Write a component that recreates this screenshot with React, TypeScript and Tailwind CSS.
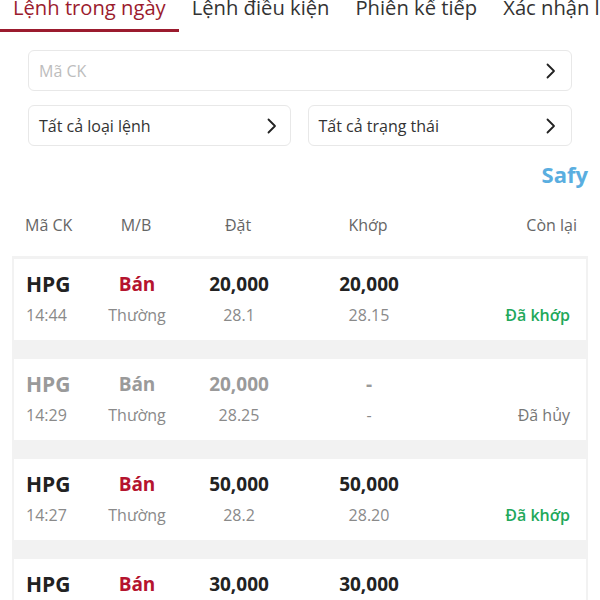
import React from "react";

type Row = {
  code: string;
  time: string;
  side: string;
  type: string;
  qty: string;
  price: string;
  mqty: string;
  mprice: string;
  status: string;
  cancelled?: boolean;
};

const rows: Row[] = [
  { code: "HPG", time: "14:44", side: "Bán", type: "Thường", qty: "20,000", price: "28.1", mqty: "20,000", mprice: "28.15", status: "Đã khớp" },
  { code: "HPG", time: "14:29", side: "Bán", type: "Thường", qty: "20,000", price: "28.25", mqty: "-", mprice: "-", status: "Đã hủy", cancelled: true },
  { code: "HPG", time: "14:27", side: "Bán", type: "Thường", qty: "50,000", price: "28.2", mqty: "50,000", mprice: "28.20", status: "Đã khớp" },
  { code: "HPG", time: "14:25", side: "Bán", type: "Thường", qty: "30,000", price: "28.3", mqty: "30,000", mprice: "28.30", status: "Đã khớp" },
];

function Chevron() {
  return (
    <svg width="10" height="16" viewBox="0 0 10 16" fill="none">
      <polyline points="1.5,1.5 8,8 1.5,14.5" stroke="#222" strokeWidth="1.8" strokeLinecap="round" strokeLinejoin="round" />
    </svg>
  );
}

export default function App() {
  const tabs = ["Lệnh trong ngày", "Lệnh điều kiện", "Phiên kế tiếp", "Xác nhận lệnh"];
  return (
    <div className="w-[600px] h-[600px] overflow-hidden bg-white font-['Open_Sans',sans-serif]">
      <div className="flex whitespace-nowrap -mt-[5px]">
        {tabs.map((t, i) => (
          <div
            key={t}
            className={
              i === 0
                ? "px-[13px] pb-[10px] text-[20.2px] leading-[24px] text-[#9b1b2e] border-b-[3px] border-[#9b1b2e]"
                : "px-[13px] pb-[10px] text-[20.2px] leading-[24px] text-[#333] border-b-[3px] border-transparent"
            }
          >
            {t}
          </div>
        ))}
      </div>

      <div className="mx-[28px] mt-[18px] h-[41px] rounded-[6px] border border-[#e8e8e8] flex items-center justify-between pl-[10px] pr-[15px]">
        <span className="text-[16px] text-[#bdbdbd]">Mã CK</span>
        <Chevron />
      </div>

      <div className="mx-[28px] mt-[14px] flex gap-[17px]">
        <div className="flex-1 h-[41px] rounded-[6px] border border-[#e8e8e8] flex items-center justify-between pl-[10px] pr-[13px]">
          <span className="text-[16px] text-[#333]">Tất cả loại lệnh</span>
          <Chevron />
        </div>
        <div className="flex-1 h-[41px] rounded-[6px] border border-[#e8e8e8] flex items-center justify-between pl-[10px] pr-[15px]">
          <span className="text-[16px] text-[#333]">Tất cả trạng thái</span>
          <Chevron />
        </div>
      </div>

      <div className="mt-[14px] mr-[12px] h-[28px] flex justify-end items-center">
        <span className="text-[22px] font-bold text-[#5aaee0] leading-[28px]">Safy</span>
      </div>

      <div className="mx-[12px] mt-[25px] pl-[13px] pr-[11px] h-[24px] grid grid-cols-[61px_100px_104px_156px_1fr] items-center text-[16px] text-[#666] leading-[24px]">
        <span>Mã CK</span>
        <span className="text-center">M/B</span>
        <span className="text-center">Đặt</span>
        <span className="text-center">Khớp</span>
        <span className="text-right">Còn lại</span>
      </div>

      <div className="mx-[12px] mt-[19px] bg-[#f2f2f2] px-[2px] pt-[3px] flex flex-col gap-[19px]">
        {rows.map((r, i) => {
          const main = r.cancelled ? "text-[#9a9a9a]" : "text-[#222]";
          const side = r.cancelled ? "text-[#9a9a9a]" : "text-[#b5142f]";
          return (
            <div
              key={i}
              className="h-[81px] bg-white pl-[12px] pr-[16px] pt-[12px] grid grid-cols-[61px_100px_104px_156px_1fr] grid-rows-[26px_26px] gap-y-[5px]"
            >
              <span className={`text-[21px] font-bold leading-[26px] ${main}`}>{r.code}</span>
              <span className={`text-[19px] font-bold leading-[26px] text-center ${side}`}>{r.side}</span>
              <span className={`text-[19px] font-bold leading-[26px] text-center ${main}`}>{r.qty}</span>
              <span className={`text-[19px] font-bold leading-[26px] text-center ${main}`}>{r.mqty}</span>
              <span />
              <span className="text-[16px] leading-[26px] text-[#8a8a8a]">{r.time}</span>
              <span className="text-[16px] leading-[26px] text-center text-[#8a8a8a]">{r.type}</span>
              <span className="text-[16px] leading-[26px] text-center text-[#8a8a8a]">{r.price}</span>
              <span className="text-[16px] leading-[26px] text-center text-[#8a8a8a]">{r.mprice}</span>
              <span
                className={
                  r.cancelled
                    ? "text-[16px] leading-[26px] text-right text-[#777]"
                    : "text-[16px] leading-[26px] text-right font-semibold text-[#22a85a]"
                }
              >
                {r.status}
              </span>
            </div>
          );
        })}
      </div>
    </div>
  );
}
